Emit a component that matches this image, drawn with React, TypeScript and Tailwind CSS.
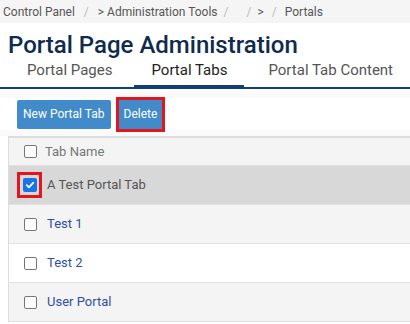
import React from 'react';

const rows = [
  { name: 'A Test Portal Tab', selected: true },
  { name: 'Test 1', selected: false },
  { name: 'Test 2', selected: false },
  { name: 'User Portal', selected: false },
];

const Box: React.FC<{ checked?: boolean }> = ({ checked }) =>
  checked ? (
    <span className="flex h-[14px] w-[14px] items-center justify-center rounded-[2px] bg-[#1a73e8]">
      <svg width="10" height="10" viewBox="0 0 10 10" fill="none">
        <path d="M1.8 5.2 L4 7.4 L8.3 2.6" stroke="white" strokeWidth="1.8" strokeLinecap="round" strokeLinejoin="round" />
      </svg>
    </span>
  ) : (
    <span className="block h-[13px] w-[13px] rounded-[2px] border border-[#767676] bg-white" />
  );

export default function App() {
  return (
    <div className="h-[324px] w-[410px] overflow-hidden bg-white font-['Roboto',sans-serif]">
      {/* breadcrumb */}
      <div className="flex h-[23px] items-center whitespace-nowrap bg-[#f5f5f5] pl-[3px] text-[12px] text-[#555]">
        <span>Control Panel</span>
        <span className="mx-[9px] text-[#bbb]">/</span>
        <span>&gt; Administration Tools</span>
        <span className="mx-[6px] text-[#bbb]">/</span>
        <span className="w-[6px]" />
        <span className="mx-[6px] text-[#bbb]">/</span>
        <span>&gt;</span>
        <span className="mx-[8px] text-[#bbb]">/</span>
        <span>Portals</span>
      </div>

      <h1 className="mt-[8px] whitespace-nowrap pl-[8px] text-[24px] font-medium leading-[28px] text-[#0f2b4e]">
        Portal Page Administration
      </h1>

      {/* tabs */}
      <div className="flex whitespace-nowrap border-b-2 border-[#0f3f75] text-[15px] leading-[20px] text-[#555]">
        <div className="shrink-0 pb-[7px] pl-[27px] pr-[22px] pt-[1px]">Portal Pages</div>
        <div className="-mb-[2px] shrink-0 border-b-[4px] border-[#0f3f75] px-[17px] pb-[5px] pt-[1px] text-[#222]">Portal Tabs</div>
        <div className="shrink-0 pb-[7px] pl-[24px] pt-[1px]">Portal Tab Content</div>
      </div>

      {/* toolbar */}
      <div className="mt-[3px] flex h-[44px] items-center gap-[5px] border-y-[6px] border-[#fafafa] bg-white pl-[17px]">
        <button className="h-[29px] whitespace-nowrap rounded-[2px] bg-[#428bca] px-[6px] text-[12px] text-white">New Portal Tab</button>
        <div className="border-[3px] border-[#e4161d]">
          <button className="h-[29px] bg-[#428bca] px-[5px] text-[12px] text-white">Delete</button>
        </div>
      </div>

      {/* table */}
      <div className="ml-[8px] border-l border-t-2 border-[#dcdcdc]">
        <div className="flex h-[28px] items-center gap-[8px] border-b border-[#e2e2e2] bg-[#f4f4f4] pl-[15px] text-[13px] text-[#777]">
          <Box />
          <span>Tab Name</span>
        </div>
        {rows.map((r, i) => (
          <div
            key={r.name}
            className={
              'flex h-[39px] items-center border-b border-[#e2e2e2] text-[13px] ' +
              (r.selected ? 'bg-[#d8d8d8]' : i % 2 === 1 ? 'bg-[#f4f4f4]' : 'bg-white')
            }
          >
            {r.selected ? (
              <span className="ml-[8px] mr-[5px] flex h-[26px] w-[25px] items-center justify-center border-[3px] border-[#e4161d]">
                <Box checked />
              </span>
            ) : (
              <span className="ml-[15px] mr-[10px]">
                <Box />
              </span>
            )}
            <span className={r.selected ? 'text-[#555]' : 'text-[#2f4fa4]'}>{r.name}</span>
          </div>
        ))}
      </div>
    </div>
  );
}
